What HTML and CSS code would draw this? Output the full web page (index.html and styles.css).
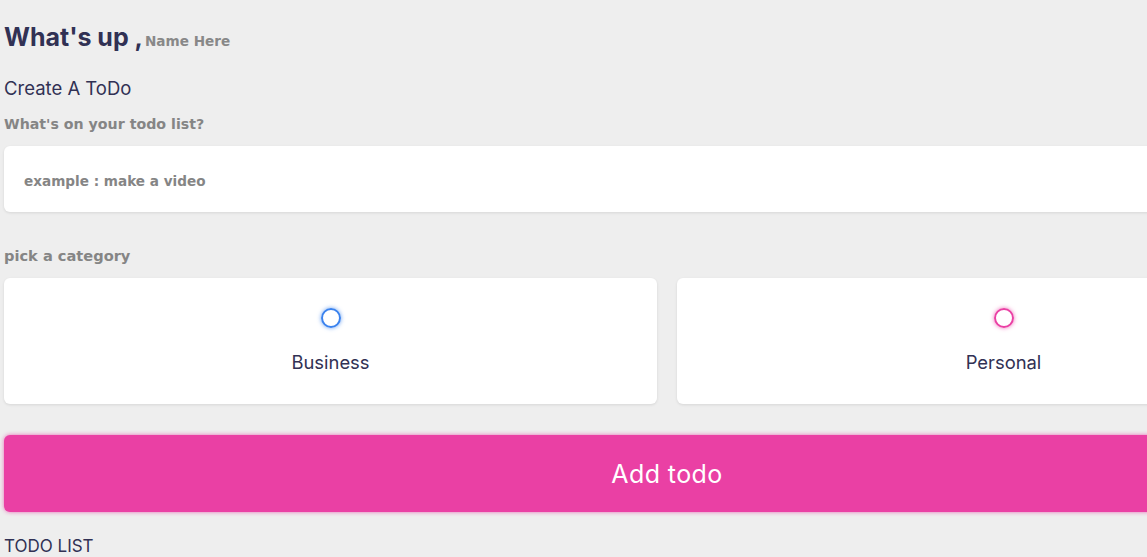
FILE: index.html
```html
<!DOCTYPE html>
<html lang="en">
<head>
<meta charset="utf-8">
<title>Todo</title>
<link rel="stylesheet" href="styles.css">
</head>
<body>
<main class="app">
  <section class="greeting">
    <h2 class="title">What's up ,<span class="name">Name Here</span></h2>
  </section>
  <section class="create-todo">
    <h3 class="create-title">Create A ToDo</h3>
    <form class="form">
      <h4>What's on your todo list?</h4>
      <input class="todo-input" type="text" placeholder="example : make a video">
      <h4 class="pick">pick a category</h4>
      <div class="options">
        <label class="option">
          <input type="radio" name="category" value="business">
          <span class="bubble business"></span>
          <span class="option-label">Business</span>
        </label>
        <label class="option">
          <input type="radio" name="category" value="personal">
          <span class="bubble personal"></span>
          <span class="option-label">Personal</span>
        </label>
      </div>
      <button class="submit" type="button">Add todo</button>
    </form>
  </section>
  <section class="todo-list">
    <h3>TODO LIST</h3>
  </section>
</main>
</body>
</html>
```

FILE: styles.css
```css
* {
  margin: 0;
  padding: 0;
  box-sizing: border-box;
}

html, body {
  overflow: hidden;
}

body {
  background: #eeeeee;
  color: #313154;
  font-family: "Inter", "DejaVu Sans", sans-serif;
}

.app {
  width: 1334px;
  padding: 22px 4px 0;
}

.title {
  font-size: 25px;
  line-height: 30px;
  font-weight: 700;
  color: #313154;
}

.name {
  margin-left: 2px;
  font-family: "DejaVu Sans", sans-serif;
  font-size: 13.6px;
  color: #888888;
  font-weight: 700;
}

.create-todo {
  margin-top: 20px;
}

h3 {
  font-size: 17px;
  line-height: 24px;
  font-weight: 400;
  color: #313154;
}

.create-title {
  font-size: 18.5px;
}

h4 {
  font-family: "DejaVu Sans", sans-serif;
  font-size: 14.2px;
  line-height: 20px;
  font-weight: 700;
  color: #858585;
}

.form {
  margin-top: 14px;
}

.todo-input {
  display: block;
  width: 100%;
  height: 66px;
  margin-top: 12px;
  padding: 4px 20px 0;
  border: none;
  outline: none;
  background: #ffffff;
  border-radius: 6px;
  box-shadow: 0 1px 3px rgba(0, 0, 0, 0.1);
  font-family: "DejaVu Sans", sans-serif;
  font-size: 13.6px;
  font-weight: 700;
  color: #313154;
}

.todo-input::placeholder {
  color: #858585;
  opacity: 1;
}

.pick {
  margin-top: 34px;
  font-size: 14.6px;
}

.options {
  display: grid;
  grid-template-columns: 1fr 1fr;
  gap: 20px;
  margin-top: 12px;
}

.option {
  display: flex;
  flex-direction: column;
  align-items: center;
  height: 126px;
  padding-top: 30px;
  background: #ffffff;
  border-radius: 6px;
  box-shadow: 0 1px 3px rgba(0, 0, 0, 0.1);
}

.option input {
  display: none;
}

.bubble {
  width: 20px;
  height: 20px;
  border-radius: 50%;
  border: 2px solid #3a82ee;
  box-shadow: 0 0 4px rgba(58, 130, 238, 0.75);
}

.bubble.personal {
  border-color: #ea40a4;
  box-shadow: 0 0 4px rgba(234, 64, 164, 0.75);
}

.option-label {
  margin-top: 22px;
  font-size: 18.4px;
  line-height: 24px;
  color: #313154;
}

.submit {
  display: block;
  width: 100%;
  height: 77px;
  margin-top: 31px;
  border: none;
  border-radius: 6px;
  background: #ea40a4;
  box-shadow: 0 0 4px rgba(234, 64, 164, 0.75);
  color: #ffffff;
  font-family: inherit;
  font-size: 25px;
  letter-spacing: 0.4px;
  font-weight: 400;
}

.todo-list {
  margin-top: 22px;
}
```
